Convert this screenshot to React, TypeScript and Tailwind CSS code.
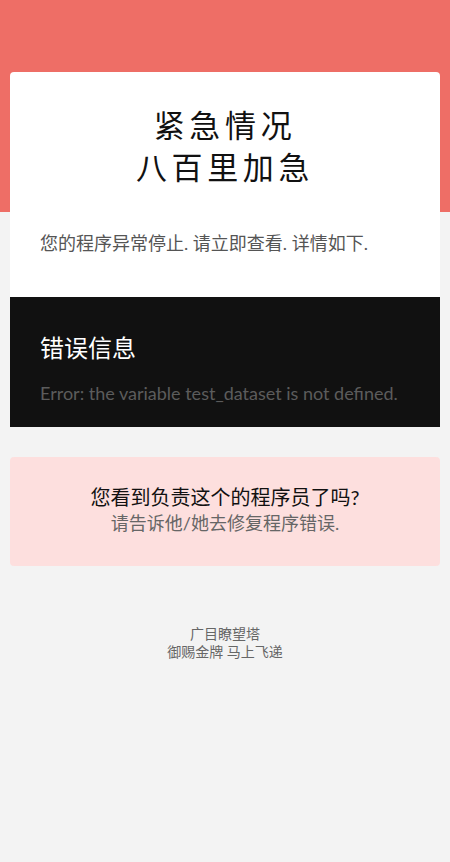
const font = { fontFamily: 'Lato, "Noto Sans CJK SC", sans-serif' }

export default function App() {
  return (
    <div
      style={font}
      className="min-h-screen bg-[#f3f3f3] bg-[linear-gradient(#ee6e66_212px,#f3f3f3_212px)] px-[10px] pt-[72px]"
    >
      {/* Card */}
      <div className="bg-white rounded-t-[4px] overflow-hidden">
        <div className="px-[30px] pt-[32px] pb-[42px]">
          <h1 className="text-center text-[31px] leading-[42px] tracking-[0.15em] font-normal text-[#111]">
            紧急情况
            <br />
            八百里加急
          </h1>
          <p className="mt-[43px] text-[18px] leading-[24px] text-[#555]">
            您的程序异常停止. 请立即查看. 详情如下.
          </p>
        </div>
        <div className="bg-[#111] px-[30px] pt-[36px] pb-[22px]">
          <h2 className="text-[24px] leading-[30px] text-white">错误信息</h2>
          <p className="mt-[18px] text-[18px] leading-[24px] text-[#5c5c5c]">
            Error: the variable test_dataset is not defined.
          </p>
        </div>
      </div>

      {/* Notice */}
      <div className="mt-[30px] rounded-[4px] bg-[#fddfde] pt-[27px] pb-[30px] text-center">
        <p className="text-[20px] leading-[26px] text-[#111]">您看到负责这个的程序员了吗?</p>
        <p className="text-[18px] leading-[26px] text-[#666]">请告诉他/她去修复程序错误.</p>
      </div>

      {/* Footer */}
      <div className="mt-[59px] text-center text-[14px] leading-[18px] text-[#666]">
        <p>广目瞭望塔</p>
        <p>御赐金牌 马上飞递</p>
      </div>
    </div>
  )
}
